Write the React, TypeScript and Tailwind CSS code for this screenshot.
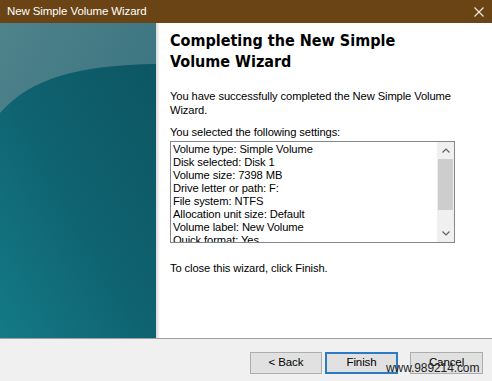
import React from "react";

const settings = [
  "Volume type: Simple Volume",
  "Disk selected: Disk 1",
  "Volume size: 7398 MB",
  "Drive letter or path: F:",
  "File system: NTFS",
  "Allocation unit size: Default",
  "Volume label: New Volume",
  "Quick format: Yes",
];

function WizardArt() {
  return (
    <svg className="w-full h-full block" viewBox="0 0 156 315" preserveAspectRatio="none">
      <defs>
        <linearGradient id="top" x1="0" y1="0" x2="1" y2="1">
          <stop offset="0" stopColor="#4f838c" />
          <stop offset="1" stopColor="#2f6b78" />
        </linearGradient>
        <linearGradient id="body" x1="1" y1="0" x2="0" y2="1">
          <stop offset="0" stopColor="#0d5663" />
          <stop offset="0.5" stopColor="#0f6270" />
          <stop offset="1" stopColor="#147a86" />
        </linearGradient>
      </defs>
      <rect width="156" height="315" fill="url(#top)" />
      <path d="M0 90 C 30 55, 80 42, 156 41 L156 315 L0 315 Z" fill="url(#body)" />
    </svg>
  );
}

export default function App() {
  return (
    <div className="w-[492px] h-[381px] flex flex-col bg-white overflow-hidden relative font-['Liberation_Sans',Arial,sans-serif] text-[11.2px] tracking-[-0.1px] text-black">
      {/* Title bar */}
      <div className="h-[23px] bg-[#6a4414] flex items-center justify-between pl-[7px] pr-[6px] shrink-0">
        <span className="text-white text-[11.5px] leading-none">New Simple Volume Wizard</span>
        <svg width="10" height="10" viewBox="0 0 10 10" className="mr-[2px]">
          <path d="M0.5 0.5 L9.5 9.5 M9.5 0.5 L0.5 9.5" stroke="#f4ece0" strokeWidth="1.1" />
        </svg>
      </div>

      {/* Content */}
      <div className="flex h-[315px] shrink-0">
        <div className="w-[156px] h-full shrink-0">
          <WizardArt />
        </div>
        <div className="w-[4px] bg-gradient-to-r from-[#d8d8d8] to-white shrink-0" />
        <div className="flex-1 pl-[10px] pt-[7px]">
          <h1 className="font-['DejaVu_Sans_Condensed','DejaVu_Sans',Verdana,sans-serif] font-bold text-[16px] tracking-normal leading-[21px] whitespace-nowrap">
            Completing the New Simple
            <br />
            Volume Wizard
          </h1>
          <p className="mt-[17px] leading-[14px] whitespace-nowrap">
            You have successfully completed the New Simple Volume
            <br />
            Wizard.
          </p>
          <p className="mt-[8px] leading-[14px]">You selected the following settings:</p>
          <div className="mt-[2px] w-[285px] h-[102px] border border-[#828790] flex">
            <div className="flex-1 pl-[2px] pt-[1px] overflow-hidden">
              {settings.map((s) => (
                <div key={s} className="leading-[13px] whitespace-nowrap">
                  {s}
                </div>
              ))}
            </div>
            <div className="w-[17px] bg-[#f0f0f0] flex flex-col items-center">
              <div className="h-[17px] flex items-center justify-center">
                <svg width="8" height="5" viewBox="0 0 8 5">
                  <path d="M0.5 4.5 L4 1 L7.5 4.5" stroke="#606060" fill="none" strokeWidth="1.2" />
                </svg>
              </div>
              <div className="w-[15px] h-[51px] bg-[#cdcdcd]" />
              <div className="flex-1" />
              <div className="h-[17px] flex items-center justify-center">
                <svg width="8" height="5" viewBox="0 0 8 5">
                  <path d="M0.5 0.5 L4 4 L7.5 0.5" stroke="#606060" fill="none" strokeWidth="1.2" />
                </svg>
              </div>
            </div>
          </div>
          <p className="mt-[18px] leading-[14px]">To close this wizard, click Finish.</p>
        </div>
      </div>

      {/* Footer */}
      <div className="h-[1px] bg-[#a0a0a0] shrink-0" />
      <div className="flex-1 bg-[#f0f0f0] flex items-start justify-end pt-[13px] pr-[9px]">
        <button className="w-[72px] h-[22px] bg-[#e1e1e1] border border-[#adadad] text-[11.5px] leading-none">
          &lt; Back
        </button>
        <button className="ml-[3px] w-[73px] h-[22px] bg-[#e1e1e1] border-2 border-[#2b7bc4] text-[11.5px] leading-none">
          Finish
        </button>
        <button className="ml-[12px] w-[73px] h-[22px] bg-[#e1e1e1] border border-[#adadad] text-[11.5px] leading-none">
          Cancel
        </button>
      </div>

      {/* watermark */}
      <span className="absolute left-[386px] top-[362px] text-[12px] text-[#222] leading-none">www.989214.com</span>
    </div>
  );
}
